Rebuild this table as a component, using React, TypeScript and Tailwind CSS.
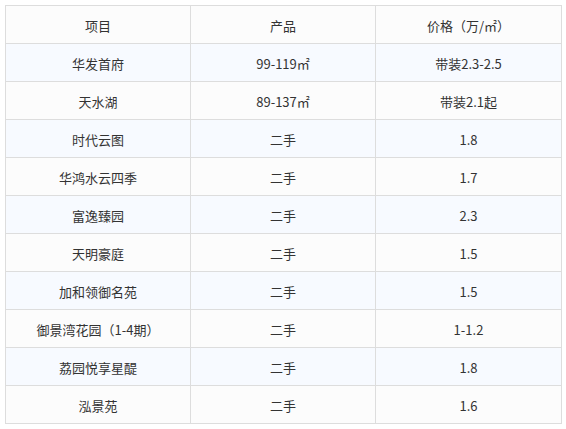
import React from "react";

const rows: [string, string, string][] = [
  ["华发首府", "99-119㎡", "带装2.3-2.5"],
  ["天水湖", "89-137㎡", "带装2.1起"],
  ["时代云图", "二手", "1.8"],
  ["华鸿水云四季", "二手", "1.7"],
  ["富逸臻园", "二手", "2.3"],
  ["天明豪庭", "二手", "1.5"],
  ["加和领御名苑", "二手", "1.5"],
  ["御景湾花园（1-4期）", "二手", "1-1.2"],
  ["荔园悦享星醍", "二手", "1.8"],
  ["泓景苑", "二手", "1.6"],
];

export default function App() {
  return (
    <div
      className="w-[566px] h-[429px] bg-white pt-[5px] pl-[5px]"
      style={{ fontFamily: '"Noto Sans CJK SC", "Noto Sans", sans-serif' }}
    >
      <table className="w-[556px] border-collapse table-fixed text-[13px] text-[#333]">
        <colgroup>
          <col className="w-[185px]" />
          <col className="w-[185px]" />
          <col className="w-[186px]" />
        </colgroup>
        <thead>
          <tr className="h-[38px] bg-[#fcfcfc]">
            {["项目", "产品", "价格（万/㎡）"].map((h) => (
              <th
                key={h}
                className="border border-[#dddddd] font-normal text-center align-middle pt-[3px] p-0"
              >
                {h}
              </th>
            ))}
          </tr>
        </thead>
        <tbody>
          {rows.map((r, i) => (
            <tr
              key={i}
              className={`h-[38px] ${i % 2 === 0 ? "bg-[#f7faff]" : "bg-[#fcfcfc]"}`}
            >
              {r.map((c, j) => (
                <td
                  key={j}
                  className="border border-[#dddddd] text-center align-middle p-0 pt-[3px]"
                >
                  {c}
                </td>
              ))}
            </tr>
          ))}
        </tbody>
      </table>
    </div>
  );
}
